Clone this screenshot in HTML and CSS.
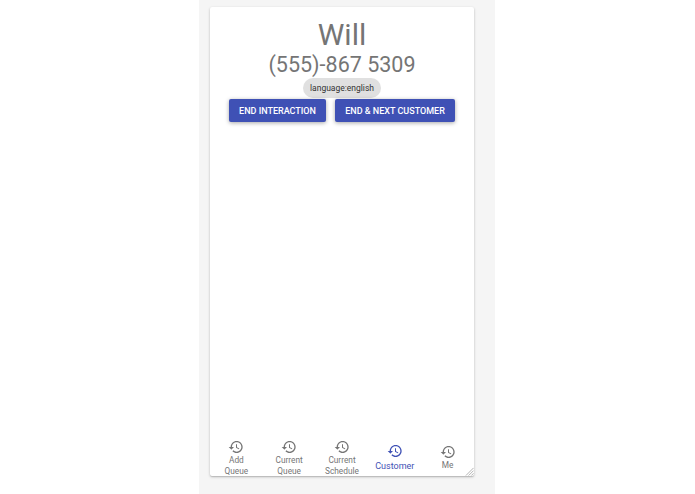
FILE: index.html
```html
<!DOCTYPE html>
<html lang="en">
<head>
<meta charset="utf-8">
<title>Customer</title>
<link rel="stylesheet" href="styles.css">
</head>
<body>
<div class="panel">
  <main class="card">
    <section class="customer">
      <h1 class="name">Will</h1>
      <p class="phone">(555)-867 5309</p>
      <span class="chip">language:english</span>
      <div class="actions">
        <button class="btn btn-end">END INTERACTION</button>
        <button class="btn btn-next">END &amp; NEXT CUSTOMER</button>
      </div>
    </section>
    <nav class="tabs">
      <a class="tab"><svg class="icon" viewBox="0 0 24 24"><path d="M13 3c-4.97 0-9 4.03-9 9H1l3.89 3.89.07.14L9 12H6c0-3.87 3.13-7 7-7s7 3.13 7 7-3.13 7-7 7c-1.93 0-3.68-.79-4.94-2.06l-1.42 1.42C8.27 19.99 10.51 21 13 21c4.97 0 9-4.03 9-9s-4.03-9-9-9zm-1 5v5l4.28 2.54.72-1.21-3.5-2.08V8H12z"/></svg><span class="label">Add<br>Queue</span></a>
      <a class="tab"><svg class="icon" viewBox="0 0 24 24"><path d="M13 3c-4.97 0-9 4.03-9 9H1l3.89 3.89.07.14L9 12H6c0-3.87 3.13-7 7-7s7 3.13 7 7-3.13 7-7 7c-1.93 0-3.68-.79-4.94-2.06l-1.42 1.42C8.27 19.99 10.51 21 13 21c4.97 0 9-4.03 9-9s-4.03-9-9-9zm-1 5v5l4.28 2.54.72-1.21-3.5-2.08V8H12z"/></svg><span class="label">Current<br>Queue</span></a>
      <a class="tab"><svg class="icon" viewBox="0 0 24 24"><path d="M13 3c-4.97 0-9 4.03-9 9H1l3.89 3.89.07.14L9 12H6c0-3.87 3.13-7 7-7s7 3.13 7 7-3.13 7-7 7c-1.93 0-3.68-.79-4.94-2.06l-1.42 1.42C8.27 19.99 10.51 21 13 21c4.97 0 9-4.03 9-9s-4.03-9-9-9zm-1 5v5l4.28 2.54.72-1.21-3.5-2.08V8H12z"/></svg><span class="label">Current<br>Schedule</span></a>
      <a class="tab tab-active"><svg class="icon" viewBox="0 0 24 24"><path d="M13 3c-4.97 0-9 4.03-9 9H1l3.89 3.89.07.14L9 12H6c0-3.87 3.13-7 7-7s7 3.13 7 7-3.13 7-7 7c-1.93 0-3.68-.79-4.94-2.06l-1.42 1.42C8.27 19.99 10.51 21 13 21c4.97 0 9-4.03 9-9s-4.03-9-9-9zm-1 5v5l4.28 2.54.72-1.21-3.5-2.08V8H12z"/></svg><span class="label">Customer</span></a>
      <a class="tab tab-me"><svg class="icon" viewBox="0 0 24 24"><path d="M13 3c-4.97 0-9 4.03-9 9H1l3.89 3.89.07.14L9 12H6c0-3.87 3.13-7 7-7s7 3.13 7 7-3.13 7-7 7c-1.93 0-3.68-.79-4.94-2.06l-1.42 1.42C8.27 19.99 10.51 21 13 21c4.97 0 9-4.03 9-9s-4.03-9-9-9zm-1 5v5l4.28 2.54.72-1.21-3.5-2.08V8H12z"/></svg><span class="label">Me</span></a>
    </nav>
    <svg class="grip" viewBox="0 0 10 10"><path d="M9.5 1 1 9.5M9.5 4 4 9.5M9.5 7 7 9.5"/></svg>
  </main>
</div>
</body>
</html>
```
FILE: styles.css
```css
* { box-sizing: border-box; }
html, body { height: 100%; }
body {
  margin: 0;
  background: #fff;
  font-family: Roboto, "Liberation Sans", sans-serif;
  display: flex;
  justify-content: center;
  overflow: hidden;
}
.panel {
  width: 296px;
  height: 494px;
  margin-left: -1px;
  padding: 7px 20px 18px 11px;
  background: #f5f5f5;
}
.card {
  position: relative;
  display: flex;
  flex-direction: column;
  justify-content: space-between;
  height: 469px;
  width: 264px;
  background: #fff;
  border-radius: 2px;
  box-shadow: 0 1px 3px rgba(0,0,0,.2), 0 1px 1px rgba(0,0,0,.12);
}
.customer {
  display: flex;
  flex-direction: column;
  align-items: center;
  padding-top: 10px;
}
.name {
  margin: 0;
  font-size: 30px;
  font-weight: 400;
  line-height: 35px;
  color: #757575;
}
.phone {
  margin: 0;
  font-size: 21.5px;
  line-height: 25px;
  color: #757575;
}
.chip {
  margin-top: 0.5px;
  height: 20px;
  line-height: 20px;
  padding: 0 7px;
  border-radius: 10px;
  background: #e0e0e0;
  font-size: 8.5px;
  color: #333;
}
.actions {
  display: flex;
  gap: 9.5px;
  margin-top: 1px;
}
.btn {
  height: 23.5px;
  padding: 1px 0 0;
  border: 0;
  border-radius: 2px;
  background: #3f51b5;
  color: #fff;
  font-family: inherit;
  font-size: 9px;
  font-weight: 500;
  box-shadow: 0 1px 4px rgba(0,0,0,.35);
}
.btn-end { width: 96.5px; }
.btn-next { width: 119.5px; }
.tabs {
  display: flex;
  height: 40px;
}
.tab {
  flex: 1 1 0;
  display: flex;
  flex-direction: column;
  align-items: center;
  color: #757575;
  font-size: 8.3px;
  line-height: 10.5px;
  text-align: center;
  padding-top: 3px;
}
.tab-active { color: #3f51b5; font-size: 9px; line-height: 14px; padding-top: 7px; }
.tab-me { padding-top: 8px; }
.icon { width: 16px; height: 16px; fill: currentColor; }
.grip {
  position: absolute;
  right: 0;
  bottom: 0;
  width: 9px;
  height: 9px;
  fill: none;
  stroke: #aaa;
  stroke-width: 1;
}
```
